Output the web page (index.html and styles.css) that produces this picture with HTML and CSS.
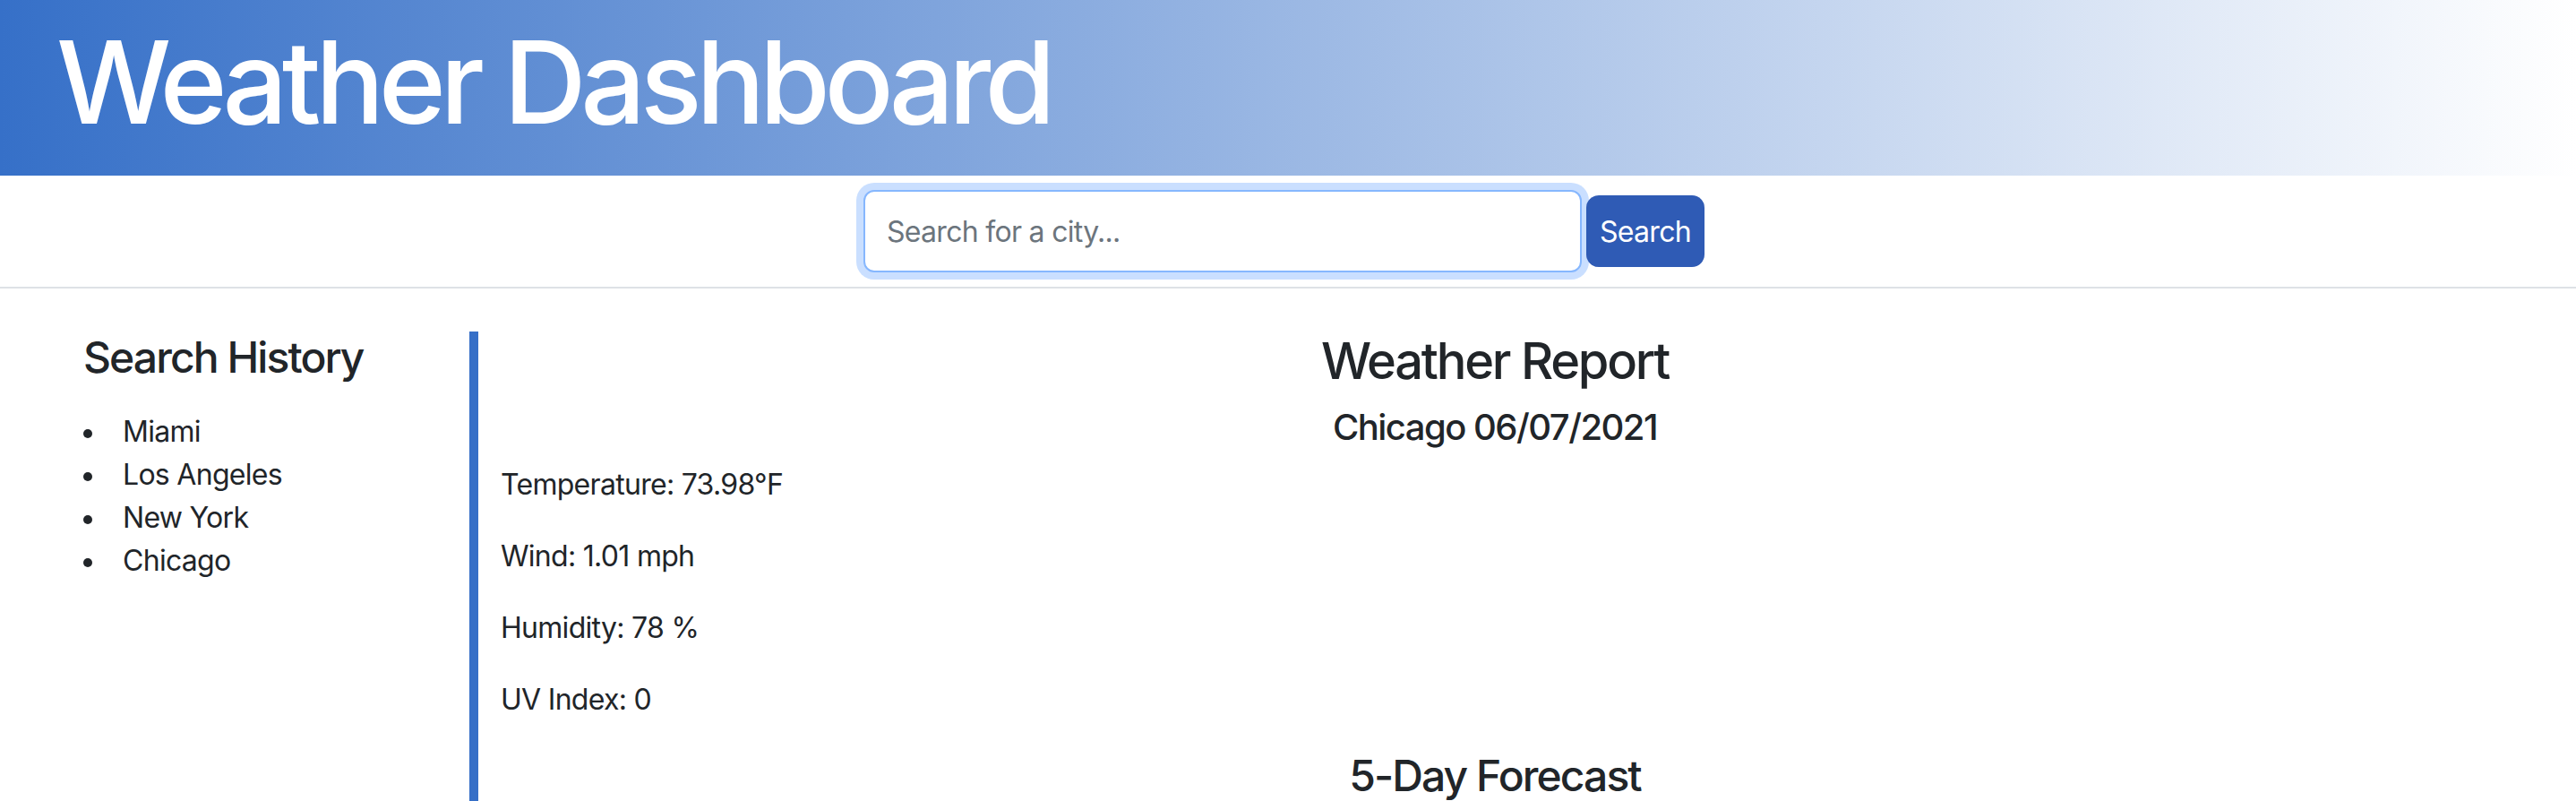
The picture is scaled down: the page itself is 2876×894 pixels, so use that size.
FILE: index.html
```html
<!DOCTYPE html>
<html lang="en">
<head>
<meta charset="utf-8">
<title>Weather Dashboard</title>
<link rel="stylesheet" href="styles.css">
</head>
<body>
<header class="hero">
  <h1 class="hero-title">Weather Dashboard</h1>
</header>
<section class="search-bar">
  <form class="search-form">
    <input class="search-input" type="text" placeholder="Search for a city...">
    <button class="search-btn" type="button">Search</button>
  </form>
</section>
<main class="layout">
  <aside class="history">
    <h4 class="history-title">Search History</h4>
    <ul class="history-list">
      <li>Miami</li>
      <li>Los Angeles</li>
      <li>New York</li>
      <li>Chicago</li>
    </ul>
  </aside>
  <section class="report">
    <h3 class="report-title">Weather Report</h3>
    <h5 class="report-city">Chicago 06/07/2021</h5>
    <p class="stat">Temperature: 73.98°F</p>
    <p class="stat">Wind: 1.01 mph</p>
    <p class="stat">Humidity: 78 %</p>
    <p class="stat">UV Index: 0</p>
    <h4 class="forecast-title">5-Day Forecast</h4>
  </section>
</main>
</body>
</html>
```

FILE: styles.css
```css
* { box-sizing: border-box; }

html, body {
  margin: 0;
  padding: 0;
  background: #fff;
}

html {
  height: 100%;
  overflow: hidden;
}

body {
  font-family: Inter, "Noto Sans", "Liberation Sans", sans-serif;
  font-size: 32px;
  line-height: 1.5;
  letter-spacing: -0.022em;
  color: #212529;
}

.hero {
  height: 196px;
  padding: 15px 63px 0;
  background: linear-gradient(to right, #3670c8, #ffffff);
}

.hero-title {
  margin: 0;
  font-size: 128px;
  font-weight: 450;
  line-height: 1.2;
  color: #fff;
  letter-spacing: -0.05em;
}

.search-bar {
  height: 126px;
  border-bottom: 2px solid #dee2e6;
  display: flex;
  align-items: center;
  justify-content: center;
  padding-right: 9px;
}

.search-form {
  display: flex;
  align-items: center;
  margin: 0;
}

.search-input {
  width: 802px;
  height: 92px;
  border: 2px solid #86b7fe;
  border-radius: 12px;
  box-shadow: 0 0 0 8px rgba(13, 110, 253, 0.22);
  padding: 0 24px;
  font-family: inherit;
  font-size: 32px;
  letter-spacing: -0.022em;
  color: #212529;
  outline: none;
}

.search-input::placeholder {
  color: #6c757d;
}

.search-btn {
  margin-left: 5px;
  width: 132px;
  height: 80px;
  border: none;
  border-radius: 14px;
  background: #2f5bb5;
  color: #fff;
  font-family: inherit;
  font-size: 32px;
  letter-spacing: -0.022em;
  padding: 0;
}

.layout {
  display: flex;
  margin-top: 48px;
}

.history {
  flex: 0 0 524px;
  padding-left: 93px;
}

.history-title {
  margin: 0 0 30px;
  font-size: 48px;
  font-weight: 500;
  line-height: 1.2;
  letter-spacing: -0.04em;
}

.history-list {
  list-style: none;
  margin: 0;
  padding: 0;
}

.history-list li::before {
  content: "";
  display: inline-block;
  width: 10px;
  height: 10px;
  margin-right: 34px;
  border-radius: 50%;
  background: #212529;
  vertical-align: middle;
}

.report {
  flex: 1;
  border-left: 10px solid #366fc7;
  padding: 0 97px 0 25px;
}

.report-title {
  margin: 0 0 16px;
  font-size: 56px;
  font-weight: 500;
  line-height: 1.2;
  letter-spacing: -0.04em;
  text-align: center;
}

.report-city {
  margin: 0 0 16px;
  font-size: 40px;
  font-weight: 500;
  line-height: 1.2;
  letter-spacing: -0.038em;
  text-align: center;
}

.stat {
  margin: 0 0 32px;
}

.forecast-title {
  margin: 0;
  font-size: 48px;
  font-weight: 500;
  line-height: 1.2;
  letter-spacing: -0.04em;
  text-align: center;
}
```
